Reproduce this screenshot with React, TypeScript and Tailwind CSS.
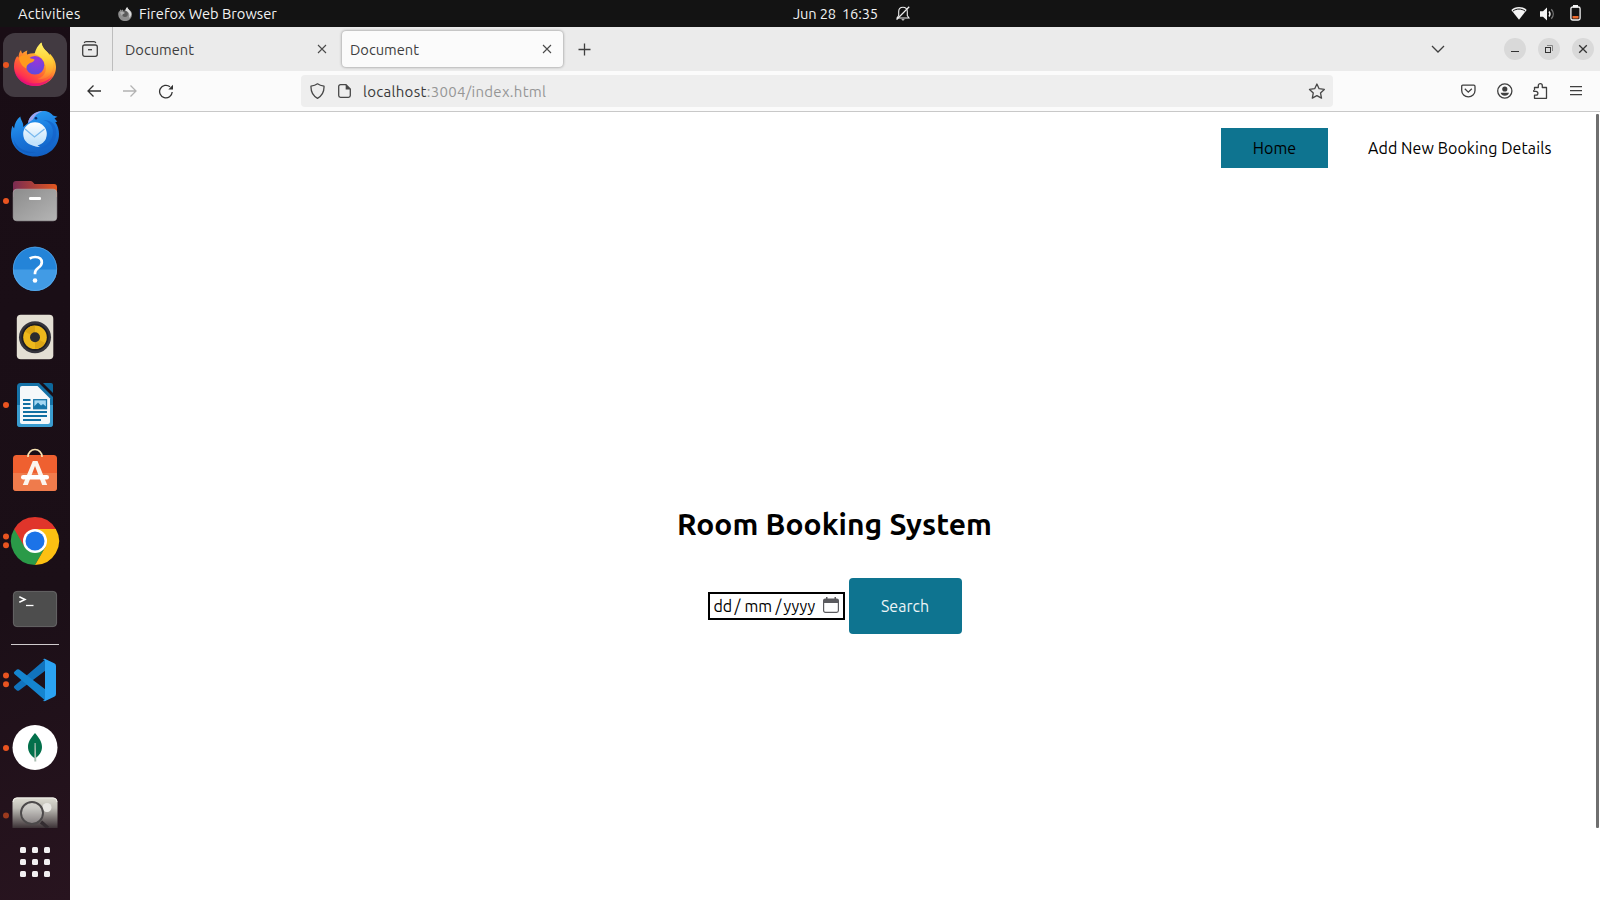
import type { ReactNode } from "react";

/* ---------- Dock ---------- */

function DockItem({ dots = 0, children }: { dots?: number; children: ReactNode }) {
  return (
    <svg viewBox="0 0 70 68" className="block h-[68px] w-[70px] shrink-0">
      {children}
      {dots === 1 && <circle cx="6" cy="34" r="3" fill="#e95420" />}
      {dots === 2 && (
        <>
          <circle cx="6" cy="29.5" r="3" fill="#e95420" />
          <circle cx="6" cy="38.3" r="3" fill="#e95420" />
        </>
      )}
    </svg>
  );
}

function FirefoxIcon() {
  return (
    <DockItem dots={1}>
      <defs>
        <linearGradient id="ffBody" x1="0.85" y1="0.1" x2="0.3" y2="1">
          <stop offset="0" stopColor="#fff044" />
          <stop offset="0.3" stopColor="#ffb02e" />
          <stop offset="0.6" stopColor="#ff6a30" />
          <stop offset="0.85" stopColor="#ff3350" />
          <stop offset="1" stopColor="#e6057a" />
        </linearGradient>
        <linearGradient id="ffFlame" x1="0.4" y1="0" x2="0.4" y2="1">
          <stop offset="0" stopColor="#fff36b" />
          <stop offset="0.45" stopColor="#ffd43a" />
          <stop offset="0.8" stopColor="#ffa02d" />
          <stop offset="1" stopColor="#ff6f35" />
        </linearGradient>
        <radialGradient id="ffGlobe" cx="0.6" cy="0.2" r="0.85">
          <stop offset="0" stopColor="#9a35d8" />
          <stop offset="1" stopColor="#5a4be0" />
        </radialGradient>
      </defs>
      <rect x="3" y="2" width="64" height="64" rx="12" fill="#423a41" />
      <path d="M21 19c.2 1.500.6 2.700 1.400 3.600 1.300-1.500 3-2.500 5-3-.5 1.300-.7 2.700-.3 4 3-1.300 6-1.600 9-1.200 1.200-4.600 3-8 5.500-10.900.6 4 2 6 4.500 8.400 1.500 1.300 2.500 2.700 3.300 4.100.3-.3.4-.8.4-1.500 3.500 3.800 6.200 8.500 6.200 13.500C56 47 46.600 55 35 55S14 46 14 35.500c0-4.700 1.300-8.200 3.300-10.600.3.700.7 1.200 1.200 1.500.2-3 .9-5.500 2.500-7.400z" fill="url(#ffBody)" />
      <path d="M34.500 23c1.200-5 3.700-9 6.700-11.500.8 4.500 3 6.500 6 9.600 5 5.500 7.300 11 5.600 17.400-2 6.800-8.800 11-15.300 9.500 6-2 9.500-6.700 8-13-1.500-6-5-10-11-12z" fill="url(#ffFlame)" />
      <circle cx="35" cy="34.300" r="9.300" fill="url(#ffGlobe)" />
      <path d="M19 26.500c2.500-2.500 5.500-3 8-2.300 1.500 1.700 2.500 2.800 4 3.200 2.700.2 3.700.7 3.500 1.700-.7 2-3.700 2.600-5.300 3.300-1.700 1.200-3 2.400-2.700 5.300-4-2-7-6-7.500-11.200z" fill="#ff9a1e" />
      <path d="M14.300 38C16 47 24 52.500 34 52.500c8 0 15-3 19-8.500-3.300 7-10 11-18 11-11 0-19.500-7-20.700-17z" fill="#e3127b" opacity=".75" />
    </DockItem>
  );
}

function ThunderbirdIcon() {
  return (
    <DockItem>
      <defs>
        <linearGradient id="tbBody" x1="0.3" y1="0" x2="0.6" y2="1">
          <stop offset="0" stopColor="#2aa0f5" />
          <stop offset="0.5" stopColor="#1a78dc" />
          <stop offset="1" stopColor="#1260c4" />
        </linearGradient>
        <linearGradient id="tbMail" x1="0" y1="0" x2="0" y2="1">
          <stop offset="0" stopColor="#ffffff" />
          <stop offset="1" stopColor="#b9defa" />
        </linearGradient>
      </defs>
      <path d="M28 24C29.500 16 36 12 43 12c5 0 8 2 10 4.500l4.500 1.300-3 1.500 2.800 3.500-2 .2C58 27 59 31 59 35c0 13-10.500 22.500-24 22.500S11 48 11 36c0-3 .4-6 1.300-9.300l1.800 2.700c.5-5 2.700-9.500 6.200-12 .5 4 3.700 6.500 2.900 10.600z" fill="url(#tbBody)" />
      <path d="M28 24c1-7 7-12 15-12-5 1.600-8.500 4.500-10 8.500z" fill="#9fa4f0" />
      <path d="M43 21c6 1.500 10 5.500 10 12 0 9-7 14-14 17 12-1 19-9 17-20-1.500-6-6-9-13-9z" fill="#1463ca" opacity=".7" />
      <path d="M12.500 36C14 47 23 54 36 53c-8 3-17 0-21-7" fill="#0f55b5" opacity=".5" />
      <circle cx="35" cy="35" r="11.800" fill="url(#tbMail)" />
      <path d="M29 43c3 4 7 5 11 5-2-1-3-2-3-4z" fill="#c5e2fb" />
      <path d="M25 30l9.500 8 10-8" fill="none" stroke="#79b9ee" strokeWidth="1.300" />
      <circle cx="36" cy="19.300" r="1.300" fill="#0a2d6b" />
    </DockItem>
  );
}

function FilesIcon() {
  return (
    <DockItem dots={1}>
      <defs>
        <linearGradient id="flBack" x1="0" y1="0" x2="1" y2="0">
          <stop offset="0" stopColor="#7a2b52" />
          <stop offset="1" stopColor="#e2571f" />
        </linearGradient>
        <linearGradient id="flFront" x1="0" y1="0" x2="1" y2="1">
          <stop offset="0" stopColor="#8c8c8c" />
          <stop offset="1" stopColor="#b5b5b5" />
        </linearGradient>
      </defs>
      <path d="M13 30V17a3 3 0 0 1 3-3h14.500a3 3 0 0 1 2.200 1l1.800 2H54a3 3 0 0 1 3 3v10z" fill="url(#flBack)" />
      <rect x="13.200" y="22.200" width="43.600" height="31.600" rx="3.500" fill="url(#flFront)" stroke="#b4b4b4" strokeWidth=".6" />
      <rect x="29" y="30" width="12" height="3" rx="1.300" fill="#fff" />
    </DockItem>
  );
}

function HelpIcon() {
  return (
    <DockItem>
      <circle cx="35" cy="33.800" r="22" fill="#2484d8" />
      <path d="M13 34.500a22 21.500 0 0 0 44 0z" fill="#419be5" />
      <circle cx="35" cy="33.800" r="21.700" fill="none" stroke="#65aeea" strokeWidth=".6" />
      <path d="M29.700 23.500c1.700-1 3.600-1.500 5.500-1.500 4 0 6.600 2 6.600 5.400 0 5.200-6.800 5.400-6.800 10.500v1.300" fill="none" stroke="#fff" strokeWidth="2.700" />
      <circle cx="35" cy="45.500" r="2.300" fill="#fff" />
    </DockItem>
  );
}

function RhythmboxIcon() {
  return (
    <DockItem>
      <rect x="16.800" y="11.700" width="36.500" height="44.500" rx="4" fill="#e4dfd4" />
      <circle cx="35" cy="34.300" r="16" fill="#35343b" />
      <circle cx="35" cy="34.300" r="13.500" fill="#1d1d22" />
      <circle cx="35" cy="34.300" r="11.800" fill="#edb81c" />
      <path d="M35 34.300L25 28.500a11.500 11.500 0 0 1 10-5.700zM35 34.300l10 5.700a11.500 11.500 0 0 1-10 5.800z" fill="#dca514" />
      <circle cx="35" cy="34.300" r="5" fill="#2c2c2e" />
    </DockItem>
  );
}

function WriterIcon() {
  return (
    <DockItem dots={1}>
      <path d="M20.500 12H39l14 14v27a3 3 0 0 1-3 3H20a3 3 0 0 1-3-3V15.500a3.500 3.500 0 0 1 3.500-3.500z" fill="#1572a7" />
      <path d="M17 34h36v19a3 3 0 0 1-3 3H20a3 3 0 0 1-3-3z" fill="#3a9ccf" />
      <path d="M22 15h15.500L50 27.500V51a2 2 0 0 1-2 2H22a2 2 0 0 1-2-2V17a2 2 0 0 1 2-2z" fill="#f5f8fa" />
      <path d="M43 12h8a2 2 0 0 1 2 2v8z" fill="#0d689c" />
      <path d="M23 29h7.500M23 33h7.500M23 37h7.500M23 41h24M23 45h24M23 49h18" stroke="#116fa2" strokeWidth="2" />
      <rect x="33.700" y="28.700" width="12.800" height="9" fill="#a5d8f3" stroke="#1675a8" strokeWidth="1.300" />
      <path d="M34 37.500v-2l4-4 3 3 2-1.500 3 2.500v2z" fill="#1675a8" />
    </DockItem>
  );
}

function SoftwareIcon() {
  return (
    <DockItem>
      <rect x="13" y="16" width="44" height="36" rx="3.500" fill="#ef6030" />
      <path d="M13 34h44v14.500a3.500 3.500 0 0 1-3.500 3.500h-37a3.500 3.500 0 0 1-3.500-3.500z" fill="#ef7b4c" />
      <path d="M28 18v-.500a7 7 0 0 1 14 0v.5" fill="none" stroke="#f7e2b2" strokeWidth="1.700" />
      <path d="M32.800 22h4.700l9.700 24h-5L35 27 27.800 46h-5z" fill="#fbf5ef" />
      <rect x="21" y="36" width="28" height="4.500" rx="2.200" fill="#fff" />
    </DockItem>
  );
}

function ChromeIcon() {
  return (
    <DockItem dots={2}>
      <path d="M14.200 22A24 24 0 0 1 55.800 22H35z" fill="#e0352b" />
      <path d="M14.200 22A24 24 0 0 0 35 58L45.400 40 35 34z" fill="#2a9a48" />
      <path d="M55.800 22A24 24 0 0 1 35 58L45.400 40 35 22z" fill="#fcc012" />
      <path d="M14.200 22h20.800v12l-10.400 6z" fill="#e0352b" />
      <circle cx="35" cy="34" r="12" fill="#fff" />
      <circle cx="35" cy="34" r="9.500" fill="#1b73e8" />
    </DockItem>
  );
}

function TerminalIcon() {
  return (
    <DockItem>
      <rect x="13.400" y="16.400" width="43.200" height="35.200" rx="3.500" fill="#4d4d4d" stroke="#747474" strokeWidth=".8" />
      <path d="M19.300 21.800l5.700 2.700-5.700 2.700" fill="none" stroke="#fff" strokeWidth="1.500" />
      <path d="M26 30.500h7.500" stroke="#fff" strokeWidth="1.300" />
    </DockItem>
  );
}

function CodeIcon() {
  return (
    <DockItem dots={2}>
      <path d="M14.400 42.200l2.500 2.200a1.700 1.700 0 0 0 2.200 0L45.500 24.500V13.200L14.400 40a1.500 1.500 0 0 0 0 2.200z" fill="#1173bd" />
      <path d="M14.400 25.800l2.500-2.200a1.700 1.700 0 0 1 2.200 0L45.500 43.500V54.800L14.400 28a1.500 1.500 0 0 1 0-2.200z" fill="#1585cf" />
      <path d="M45.200 13l9 4.300A2.800 2.800 0 0 1 56 20v28a2.800 2.800 0 0 1-1.800 2.700l-9 4.300c-1 .4-2 0-2.600-.8 1.400.7 2.400-.1 2.400-1.700v-37c0-1.600-1-2.400-2.400-1.700.6-.8 1.600-1.200 2.600-.8z" fill="#2ba3f2" />
    </DockItem>
  );
}

function MongoIcon() {
  return (
    <DockItem dots={1}>
      <circle cx="35" cy="33.500" r="22.500" fill="#fff" />
      <path d="M35 19c4 5 7 8.500 7 14 0 5-3 8.500-6.300 11h-1.400C31 41.500 28 38 28 33c0-5.500 3-9 7-14z" fill="#03704b" />
      <path d="M34.500 29h1.200l.6 18.500h-2z" fill="#aabfb2" />
    </DockItem>
  );
}

function ImageViewerIcon() {
  return (
    <svg viewBox="0 0 70 46" className="block h-[46px] w-[70px] shrink-0">
      <defs>
        <linearGradient id="ivFade" x1="0" y1="0" x2="0" y2="1">
          <stop offset="0" stopColor="#deddd3" />
          <stop offset="0.35" stopColor="#bebcb5" />
          <stop offset="1" stopColor="#3c3236" />
        </linearGradient>
      </defs>
      <path d="M12.500 46V20a4.500 4.500 0 0 1 4.500-4.500h36a4.500 4.500 0 0 1 4.500 4.500v26z" fill="url(#ivFade)" />
      <path d="M13 20a4 4 0 0 1 4-4h36a4 4 0 0 1 4 4" fill="none" stroke="#efeee8" strokeWidth="1" />
      <circle cx="47" cy="25.500" r="4.500" fill="#e8e7e3" />
      <circle cx="32" cy="31" r="11" fill="#ddd" fillOpacity=".35" stroke="#4c494a" strokeWidth="1.900" />
      <path d="M41 40l2 1.500 5 4.500" fill="none" stroke="#332c30" strokeWidth="3.500" />
      <circle cx="6" cy="33.500" r="3" fill="#9c3a1e" />
    </svg>
  );
}

function Dock() {
  return (
    <aside className="flex w-[70px] shrink-0 flex-col items-center bg-linear-160 from-[#190d15] via-[#1b0f17] via-65% to-[#28141f] pt-1">
      <FirefoxIcon />
      <ThunderbirdIcon />
      <FilesIcon />
      <HelpIcon />
      <RhythmboxIcon />
      <WriterIcon />
      <SoftwareIcon />
      <ChromeIcon />
      <TerminalIcon />
      <div className="my-[1px] h-px w-12 shrink-0 bg-[#cfcbcd]" />
      <CodeIcon />
      <MongoIcon />
      <ImageViewerIcon />
      <div className="mt-[19px] grid grid-cols-3 gap-1.5">
        {Array.from({ length: 9 }, (_, i) => (
          <span key={i} className="size-1.5 rounded-[1.5px] bg-[#f2f0f1]" />
        ))}
      </div>
    </aside>
  );
}

/* ---------- System bar ---------- */

function TopBar() {
  return (
    <header className="flex h-[27px] shrink-0 items-center bg-[#131313] text-[14.667px] leading-[18px] text-[#f2f2f2]">
      <div className="flex w-[793px] items-center pl-[18px]">
        <span className="w-[100px] pt-px tracking-[0.24px]">Activities</span>
        <svg viewBox="0 0 14 14" className="mr-[7px] size-[14px]">
          <path d="M2.300 2.200l1 1.200L5 2.500v1.200l2.300-.3C7.600 2 8.300 1 9.200 0c.3 1.600 1.300 2.200 2.500 3.400l.8.300C13.600 5 14 6 14 7.400A6.800 6.600 0 0 1 .2 7.400c0-1.600.4-2.500 1-3.400l.4.500z" fill="#8e8e8e" />
          <path d="M7.300 3.400C7.600 2 8.300 1 9.200 0c.3 1.600 1.300 2.200 2.500 3.400C14 6 13.500 9 11 11c1-3 .5-6-3.700-7.600z" fill="#dedede" />
          <circle cx="7" cy="7" r="2.900" fill="#5b5b5b" />
          <path d="M2 5.500c2-1.500 4-.5 5 .5L4.500 7.500 4 9z" fill="#b0b0b0" />
        </svg>
        <span className="pt-px">Firefox Web Browser</span>
      </div>
      <span className="w-[49px] tracking-[-0.15px]">Jun 28</span>
      <span className="w-[54px] tracking-[-0.15px]">16:35</span>
      <svg viewBox="0 0 14 15" className="h-[15px] w-[14px]" fill="none" stroke="#efefef" strokeWidth="1.100">
        <path d="M1 12h12L11.300 9.500V5.500C11.300 3 9.500 1.300 7 1.300S2.700 3 2.700 5.500v4z" />
        <path d="M.6 13.600L13.200.8" strokeWidth="1.300" />
        <path d="M5.200 13.200h3.600L7 14.800z" fill="#efefef" stroke="none" />
      </svg>
      <div className="ml-auto flex items-center pr-[19px]">
        <svg viewBox="0 0 16 13" className="mr-[13px] h-[13px] w-4">
          <path d="M8 0C4.900 0 2.200 1 .3 2.900L8 12.700l7.700-9.800C13.800 1 11.100 0 8 0z" fill="#f4f4f4" />
          <path d="M2 4C5.500 1.400 10.500 1.400 14 4" fill="none" stroke="#131313" strokeWidth="1" />
        </svg>
        <svg viewBox="0 0 15 14" className="mr-[15px] h-[14px] w-[15px]" fill="none">
          <path d="M0 4.300h3L7 .5v13L3 9.700H0z" fill="#f4f4f4" />
          <path d="M9 4.500c1.200 1.500 1.200 3.500 0 5" stroke="#f4f4f4" strokeWidth="1.400" />
          <path d="M11.300 2.300c2.600 2.800 2.600 6.600 0 9.400" stroke="#777" strokeWidth="1.300" />
        </svg>
        <svg viewBox="0 0 11 16" className="mb-px h-4 w-[11px]">
          <rect x="3" y="0" width="5" height="2.500" fill="#f4f4f4" />
          <rect x=".9" y="2" width="9.200" height="13" rx="1.800" fill="none" stroke="#f4f4f4" strokeWidth="1.300" />
          <rect x="2.500" y="11" width="6" height="2.500" fill="#f06a2c" />
        </svg>
      </div>
    </header>
  );
}

/* ---------- Browser chrome ---------- */

function CloseIcon() {
  return (
    <svg viewBox="0 0 10 10" className="size-2.5" fill="none" stroke="#4a4a4a" strokeWidth="1.100">
      <path d="M1 1l8 8M9 1l-8 8" />
    </svg>
  );
}

function TabStrip() {
  return (
    <div className="flex h-11 shrink-0 items-center bg-[#ebebeb] text-[14.667px] leading-5 text-[#3e3e3e]">
      <div className="flex h-full w-[43px] items-center border-r border-[#bdbdbd] pl-3">
        <svg viewBox="0 0 16 16" className="size-4" fill="none" stroke="#3f3f3f" strokeWidth="1.300">
          <rect x=".7" y="4" width="14.600" height="11.300" rx="2" />
          <path d="M6 8.700h4" />
          <path d="M2.200 1.900C2.600 1 3.200.7 4 .7h8c.8 0 1.400.3 1.800 1.200" />
        </svg>
      </div>
      <div className="flex w-[229px] items-center justify-between pr-[15px] pl-3">
        <span className="pt-0.5">Document</span>
        <CloseIcon />
      </div>
      <div className="flex h-9 w-[221px] items-center justify-between rounded bg-[#fbfbfb] pr-[11px] pl-2 shadow-[0_0_3px_rgba(0,0,0,0.45)]">
        <span className="pt-0.5">Document</span>
        <CloseIcon />
      </div>
      <svg viewBox="0 0 13 13" className="ml-[15px] size-[13px]" fill="none" stroke="#3f3f3f" strokeWidth="1.300">
        <path d="M6.500.5v12M.5 6.500h12" />
      </svg>
      <div className="ml-auto flex items-center pr-1.5">
        <svg viewBox="0 0 14 8" className="mr-[59px] h-2 w-[14px]" fill="none" stroke="#3f3f3f" strokeWidth="1.300">
          <path d="M1 1l6 6 6-6" />
        </svg>
        <div className="flex gap-3">
          <span className="flex size-[22px] items-center justify-center rounded-full bg-[#d9d9d9]">
            <span className="mt-[5px] h-px w-2 bg-[#333]" />
          </span>
          <span className="flex size-[22px] items-center justify-center rounded-full bg-[#d9d9d9]">
            <svg viewBox="0 0 8 8" className="size-2" fill="none">
              <rect x=".5" y="2.500" width="5" height="5" stroke="#333" />
              <path d="M2 .5h5.500V6" stroke="#888" />
            </svg>
          </span>
          <span className="flex size-[22px] items-center justify-center rounded-full bg-[#d9d9d9]">
            <svg viewBox="0 0 10 10" className="size-2.5" fill="none" stroke="#333" strokeWidth="1.300">
              <path d="M1.200 1.200l7.600 7.600M8.800 1.200L1.200 8.800" />
            </svg>
          </span>
        </div>
      </div>
    </div>
  );
}

function Toolbar() {
  return (
    <div className="flex h-[41px] shrink-0 items-center border-b border-[#c8c8c8] bg-[#fbfbfb]">
      <div className="flex w-[231px] items-center pl-[17px]">
        <svg viewBox="0 0 14 12" className="mr-[22px] h-3 w-[14px]" fill="none" stroke="#333" strokeWidth="1.300">
          <path d="M14 6H1M6.500.5L1 6l5.500 5.500" />
        </svg>
        <svg viewBox="0 0 14 12" className="mr-[21px] h-3 w-[14px]" fill="none" stroke="#b3b3b3" strokeWidth="1.300">
          <path d="M0 6h13M7.500.5L13 6l-5.500 5.500" />
        </svg>
        <svg viewBox="0 0 15 15" className="size-[15px]" fill="none" stroke="#333" strokeWidth="1.300">
          <path d="M14.200 8A6.300 6.300 0 1 1 12 2.800" />
          <path d="M15 .8v4.700h-4.700z" fill="#333" stroke="none" />
        </svg>
      </div>
      <div className="flex h-8 w-[1032px] items-center rounded bg-[#eeeeee] pr-2 pl-[8.500px]">
        <svg viewBox="0 0 15 16" className="mr-[13.500px] h-4 w-[15px]" fill="none" stroke="#484848" strokeWidth="1.300">
          <path d="M7.500.8c1.700 1.300 3.700 2 6.500 2.300C14.300 9 12 13 7.500 15.300 3 13 .7 9 1 3.100 3.800 2.800 5.800 2.100 7.500.8z" strokeLinejoin="round" />
        </svg>
        <svg viewBox="0 0 13 14" className="mr-3 h-[14px] w-[13px]" fill="none" stroke="#484848" strokeWidth="1.300">
          <path d="M8 .7H2.500C1.500.7.7 1.500.7 2.500v9c0 1 .8 1.800 1.800 1.800h8c1 0 1.800-.8 1.800-1.800V5z" />
          <path d="M7.700.5v5h4.800z" fill="#484848" stroke="none" />
        </svg>
        <span className="pt-0.5 text-[15px] leading-5 tracking-[0.29px] text-[#3a3a3a]">
          localhost<span className="text-[#969696]">:3004/index.html</span>
        </span>
        <svg viewBox="0 0 17 16" className="ml-auto h-4 w-[17px]" fill="none" stroke="#484848" strokeWidth="1.300" strokeLinejoin="round">
          <path d="M8.900 1l2.200 4.700 5.200.7-3.800 3.500 1 5.200-4.600-2.500-4.600 2.500 1-5.200L1.500 6.400l5.200-.7z" />
        </svg>
      </div>
      <div className="ml-auto flex items-center pr-[18px]">
        <svg viewBox="0 0 15 14" className="mr-[21px] h-[14px] w-[15px]" fill="none" stroke="#3f3f3f" strokeWidth="1.300">
          <path d="M1.800 1.200h11c.7 0 1.200.5 1.200 1.200v4.200a6.600 6.300 0 0 1-13.300 0V2.400c0-.7.4-1.200 1.100-1.200z" />
          <path d="M3.800 4.800l3.500 3.300 3.500-3.300" />
        </svg>
        <svg viewBox="0 0 16 16" className="mr-5 size-4" fill="none">
          <circle cx="7.800" cy="8" r="7.100" stroke="#3f3f3f" strokeWidth="1.300" />
          <circle cx="7.800" cy="6" r="2.600" fill="#3f3f3f" />
          <path d="M3.600 9.800H12c-.5 2-2 3-4.200 3s-3.700-1-4.200-3z" fill="#3f3f3f" />
        </svg>
        <svg viewBox="0 0 15 16" className="mr-[22px] h-4 w-[15px]" fill="none" stroke="#3f3f3f" strokeWidth="1.300" strokeLinejoin="round">
          <path d="M1.500 7V4.500h3.800V2.700a2 2 0 0 1 4 0v1.800h4.200v10.800h-12v-3.100H3a1.900 1.900 0 0 0 0-3.800H.8V7" />
        </svg>
        <svg viewBox="0 0 12 10" className="h-2.5 w-3" stroke="#3f3f3f" strokeWidth="1.200">
          <path d="M0 .6h12M0 4.600h12M0 8.600h12" />
        </svg>
      </div>
    </div>
  );
}

/* ---------- Page ---------- */

function BookingPage() {
  return (
    <div className="flex min-h-0 flex-1 bg-white text-black">
      <main className="flex flex-1 flex-col">
        <nav className="flex h-[72px] items-center justify-end pr-11 text-[16px] font-[430]">
          <a className="flex h-10 w-[107px] items-center justify-center bg-[#0e7490] tracking-[0.1px]">Home</a>
          <a className="ml-10 w-[184px] tracking-[0.08px] whitespace-nowrap">Add New Booking Details</a>
        </nav>
        <section className="flex flex-col items-center pt-[320px] pl-[3px]">
          <h1 className="text-[30px] leading-10 font-[750] tracking-[0.05px]">Room Booking System</h1>
          <div className="mt-[34px] flex items-center gap-1">
            <div className="flex h-7 w-[137px] items-center border-2 border-black pl-1 text-[16px] font-[430]">
              <span className="w-[21px]">dd</span>
              <span className="w-2.5">/</span>
              <span className="w-[31px]">mm</span>
              <span className="w-2">/</span>
              <span className="w-[39px]">yyyy</span>
              <svg viewBox="0 0 16 16" className="mb-0.5 size-4">
                <path d="M3 0h1.500v1.500h7V0H13v1.500h.8A2.200 2.200 0 0 1 16 3.700V6H0V3.700a2.200 2.200 0 0 1 2.200-2.200H3z" fill="#5b5b5f" />
                <rect x=".6" y="3" width="14.800" height="12.300" rx="1.800" fill="none" stroke="#5b5b5f" strokeWidth="1.200" />
              </svg>
            </div>
            <button className="h-14 w-[113px] rounded bg-[#0e7490] text-[16px] text-[#ecf5f7]">Search</button>
          </div>
        </section>
      </main>
      <div className="mt-0.5 mr-px h-[714px] w-[3px] rounded-[1px] bg-[#6f6f6f]" />
    </div>
  );
}

export default function App() {
  return (
    <div className="flex h-[900px] w-[1600px] flex-col overflow-hidden font-['Ubuntu','Noto_Sans',sans-serif]">
      <TopBar />
      <div className="flex min-h-0 flex-1">
        <Dock />
        <div className="flex min-w-0 flex-1 flex-col">
          <TabStrip />
          <Toolbar />
          <BookingPage />
        </div>
      </div>
    </div>
  );
}
